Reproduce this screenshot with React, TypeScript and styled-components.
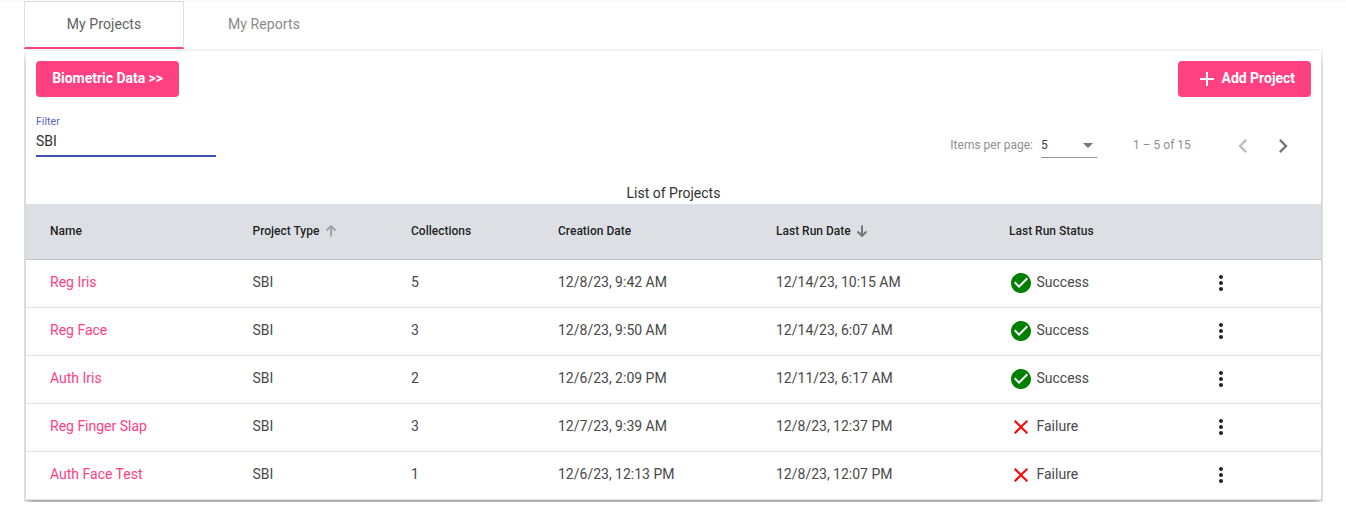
import React from "react";
import styled, { createGlobalStyle } from "styled-components";

const GlobalStyle = createGlobalStyle`
  *, *::before, *::after { box-sizing: border-box; }
  body {
    margin: 0;
    background: #fff;
    color: rgba(0, 0, 0, 0.87);
    font-family: Roboto, "Liberation Sans", sans-serif;
    font-size: 14px;
    line-height: 20px;
  }
`;

const Page = styled.main`
  height: 526px;
  padding: 1px 23px 0 24px;
  background: linear-gradient(#f8f8f8, #fdfdfd 2px, #fff 4px);
`;

const TabBar = styled.nav`
  display: flex;
  height: 48px;
`;

const Tab = styled.button<{ $active?: boolean }>`
  width: 160px;
  height: 48px;
  padding: 0 0 ${(p) => (p.$active ? 2 : 3)}px;
  border: 1px solid ${(p) => (p.$active ? "#e0e0e0" : "transparent")};
  border-bottom: ${(p) => (p.$active ? "2px solid #ff4081" : "0")};
  background: ${(p) => (p.$active ? "#fff" : "transparent")};
  color: ${(p) => (p.$active ? "#606060" : "#8a8a8a")};
  font: 400 14px/20px Roboto, sans-serif;
  letter-spacing: 0.08px;
`;

const TabBody = styled.section`
  height: 453px;
  padding: 2px;
  overflow: hidden;
`;

const Card = styled.div`
  height: 449px;
  background: #fff;
  box-shadow: 0 5px 5px -3px rgba(0, 0, 0, 0.2), 0 8px 10px 1px rgba(0, 0, 0, 0.14),
    0 3px 14px 2px rgba(0, 0, 0, 0.12);
`;

const Actions = styled.div`
  display: flex;
  justify-content: space-between;
  padding: 10px 10px 0;
`;

const Button = styled.button<{ $width: number }>`
  display: flex;
  align-items: center;
  justify-content: flex-end;
  gap: 3px;
  width: ${(p) => p.$width}px;
  height: 36px;
  padding: 0 16px 2px;
  border: 0;
  border-radius: 4px;
  background: #ff4081;
  color: #fff;
  font: 700 14px/34px Roboto, sans-serif;
  letter-spacing: -0.03px;
  white-space: nowrap;

  svg { position: relative; top: 1px; }
`;

const Toolbar = styled.div`
  display: flex;
  justify-content: space-between;
  height: 85px;
  padding: 14px 18px 0 10px;
`;

const FilterField = styled.label`
  display: block;
  width: 180px;
  height: 46px;
  border-bottom: 2px solid #3f51b5;
`;

const FilterLabel = styled.span`
  display: block;
  height: 20px;
  color: #5565be;
  font-size: 10.5px;
  font-weight: 400;
  line-height: 21px;
  letter-spacing: 0.05px;
`;

const FilterInput = styled.input`
  display: block;
  width: 100%;
  height: 20px;
  padding: 0;
  border: 0;
  outline: 0;
  background: transparent;
  color: #303030;
  font: 400 14px/20px Roboto, sans-serif;
`;

const Paginator = styled.div`
  display: flex;
  align-items: center;
  height: 40px;
  margin-top: 15px;
  padding-bottom: 1px;
  color: #8f8f8f;
  font-size: 12px;
`;

const PaginatorText = styled.span<{ $width?: number }>`
  width: ${(p) => (p.$width ? `${p.$width}px` : "auto")};
  padding-bottom: 2px;
`;

const PageSize = styled.div`
  display: flex;
  align-items: center;
  justify-content: space-between;
  width: 56px;
  height: 25px;
  margin: 0 36px 0 8px;
  padding: 0 4px 0 0;
  border-bottom: 1px solid #949494;
  color: #404040;
`;

const Caret = styled.span`
  border: 5px solid transparent;
  border-top-color: #757575;
  border-bottom: 0;
`;

const PagerButton = styled.button`
  display: grid;
  place-items: center;
  width: 40px;
  height: 40px;
  padding: 0;
  border: 0;
  background: transparent;
`;

const Caption = styled.h1`
  height: 22px;
  margin: 0;
  color: #303030;
  font: 400 14px/22px Roboto, sans-serif;
  text-align: center;
`;

const Row = styled.div<{ $head?: boolean }>`
  display: grid;
  grid-template-columns: 202.5px 158.5px 147px 218px 233px 200px 1fr;
  align-items: center;
  height: ${(p) => (p.$head ? 56 : 48)}px;
  padding: 0 0 ${(p) => (p.$head ? 2 : 3)}px 24px;
  border-bottom: 1px solid ${(p) => (p.$head ? "#bfc2c7" : "#e0e0e0")};
  background: ${(p) => (p.$head ? "#dcdfe3" : "#fff")};
`;

const HeadCell = styled.div`
  display: flex;
  align-items: center;
  gap: 5.5px;
  color: rgba(0, 0, 0, 0.87);
  font-size: 12px;
  font-weight: 500;
`;

const Cell = styled.div`
  display: flex;
  align-items: center;
  color: #484848;
`;

const ProjectLink = styled(Cell)`
  color: #ff4081;
`;

const StatusCell = styled(Cell)`
  gap: 3.5px;

  svg { position: relative; top: 1px; }
`;

const MenuCell = styled(Cell)`
  padding-top: 2px;
`;

function Icon({ d, size = 24, fill = "currentColor" }: { d: string; size?: number; fill?: string }) {
  return (
    <svg width={size} height={size} viewBox="0 0 24 24" fill={fill} aria-hidden="true">
      <path d={d} />
    </svg>
  );
}

const ADD = "M19 13h-6v6h-2v-6H5v-2h6V5h2v6h6v2z";
const CHECK = "M12 2C6.48 2 2 6.48 2 12s4.48 10 10 10 10-4.48 10-10S17.52 2 12 2zm-2 15l-5-5 1.41-1.41L10 14.17l7.59-7.59L19 8l-9 9z";
const CLOSE = "M19 6.41L17.59 5 12 10.59 6.41 5 5 6.41 10.59 12 5 17.59 6.41 19 12 13.41 17.59 19 19 17.59 13.41 12z";
const MORE = "M12 8c1.1 0 2-.9 2-2s-.9-2-2-2-2 .9-2 2 .9 2 2 2zm0 2c-1.1 0-2 .9-2 2s.9 2 2 2 2-.9 2-2-.9-2-2-2zm0 6c-1.1 0-2 .9-2 2s.9 2 2 2 2-.9 2-2-.9-2-2-2z";
const PREV = "M15.41 7.41L14 6l-6 6 6 6 1.41-1.41L10.83 12z";
const NEXT = "M10 6L8.59 7.41 13.17 12l-4.58 4.59L10 18l6-6z";

function SortArrow({ down }: { down?: boolean }) {
  return (
    <svg width="12" height="12" viewBox="0 0 12 12" fill="none" stroke={down ? "#757575" : "#a3a5a8"} strokeWidth="2">
      <path d={down ? "M6 0.500V11M1.500 6.500L6 11l4.500-4.500" : "M6 11.500V1M1.500 5.500L6 1l4.500 4.500"} />
    </svg>
  );
}

const projects = [
  { name: "Reg Iris", collections: 5, created: "12/8/23, 9:42 AM", lastRun: "12/14/23, 10:15 AM", ok: true },
  { name: "Reg Face", collections: 3, created: "12/8/23, 9:50 AM", lastRun: "12/14/23, 6:07 AM", ok: true },
  { name: "Auth Iris", collections: 2, created: "12/6/23, 2:09 PM", lastRun: "12/11/23, 6:17 AM", ok: true },
  { name: "Reg Finger Slap", collections: 3, created: "12/7/23, 9:39 AM", lastRun: "12/8/23, 12:37 PM", ok: false },
  { name: "Auth Face Test", collections: 1, created: "12/6/23, 12:13 PM", lastRun: "12/8/23, 12:07 PM", ok: false },
];

export default function App() {
  return (
    <>
      <GlobalStyle />
      <Page>
        <TabBar>
          <Tab $active>My Projects</Tab>
          <Tab>My Reports</Tab>
        </TabBar>
        <TabBody>
          <Card>
            <Actions>
              <Button $width={143}>Biometric Data &gt;&gt;</Button>
              <Button $width={133}>
                <Icon d={ADD} />
                Add Project
              </Button>
            </Actions>
            <Toolbar>
              <FilterField>
                <FilterLabel>Filter</FilterLabel>
                <FilterInput defaultValue="SBI" />
              </FilterField>
              <Paginator>
                <PaginatorText>Items per page:</PaginatorText>
                <PageSize>
                  5
                  <Caret />
                </PageSize>
                <PaginatorText $width={90}>1 – 5 of 15</PaginatorText>
                <PagerButton aria-label="Previous page">
                  <Icon d={PREV} size={28} fill="#bdbdbd" />
                </PagerButton>
                <PagerButton aria-label="Next page">
                  <Icon d={NEXT} size={28} fill="#757575" />
                </PagerButton>
              </Paginator>
            </Toolbar>
            <Caption>List of Projects</Caption>
            <Row $head>
              <HeadCell>Name</HeadCell>
              <HeadCell>
                Project Type <SortArrow />
              </HeadCell>
              <HeadCell>Collections</HeadCell>
              <HeadCell>Creation Date</HeadCell>
              <HeadCell>
                Last Run Date <SortArrow down />
              </HeadCell>
              <HeadCell>Last Run Status</HeadCell>
            </Row>
            {projects.map((p) => (
              <Row key={p.name}>
                <ProjectLink>{p.name}</ProjectLink>
                <Cell>SBI</Cell>
                <Cell>{p.collections}</Cell>
                <Cell>{p.created}</Cell>
                <Cell>{p.lastRun}</Cell>
                <StatusCell>
                  <Icon d={p.ok ? CHECK : CLOSE} fill={p.ok ? "green" : "red"} />
                  {p.ok ? "Success" : "Failure"}
                </StatusCell>
                <MenuCell>
                  <Icon d={MORE} fill="#212121" />
                </MenuCell>
              </Row>
            ))}
          </Card>
        </TabBody>
      </Page>
    </>
  );
}
